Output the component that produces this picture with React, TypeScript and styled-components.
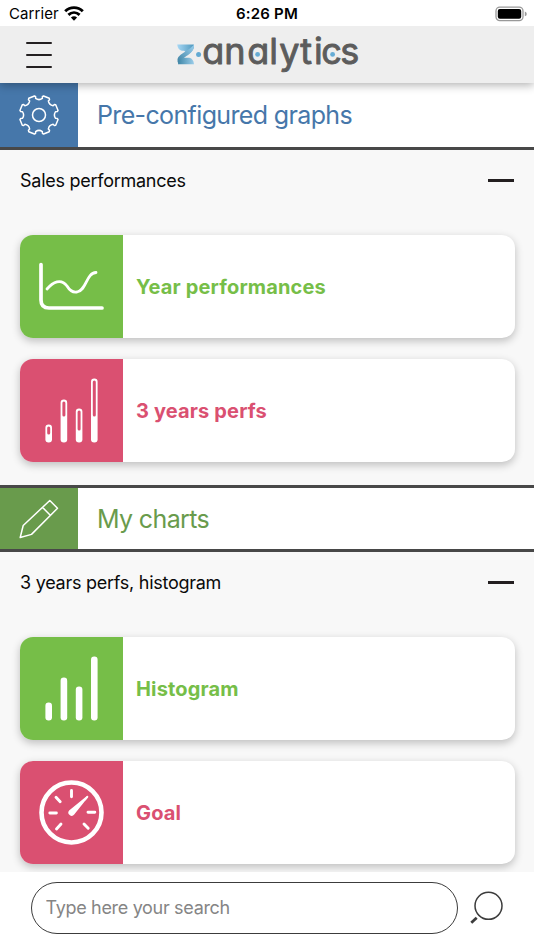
import React from "react";
import styled, { createGlobalStyle } from "styled-components";

const GlobalStyle = createGlobalStyle`
  * { box-sizing: border-box; }
  body { margin: 0; background: #f8f8f8; font-family: Inter, "Liberation Sans", sans-serif; }
`;

const Screen = styled.div`
  display: flex;
  flex-direction: column;
  height: 950px;
  overflow: hidden;
  background: #f8f8f8;
`;

const StatusBar = styled.div`
  flex: none;
  position: relative;
  z-index: 3;
  display: grid;
  grid-template-columns: 1fr auto 1fr;
  align-items: center;
  height: 26px;
  padding: 1px 7px 0 9px;
  background: #fff;
  color: #000;
  font-size: 15px;
`;

const Carrier = styled.div`
  display: flex;
  align-items: center;
  gap: 5px;
  letter-spacing: 0.08px;
`;

const Clock = styled.div`
  margin-right: 2px;
  font-weight: 600;
  letter-spacing: 0.2px;
`;

const BatteryIcon = styled.svg`
  display: block;
  justify-self: end;
`;

const Header = styled.header`
  flex: none;
  position: relative;
  z-index: 2;
  display: flex;
  align-items: center;
  height: 57px;
  background: #eee;
  box-shadow: 0 2px 9px rgba(0, 0, 0, 0.32);
`;

const MenuButton = styled.button`
  display: flex;
  flex-direction: column;
  justify-content: space-between;
  width: 26px;
  height: 26px;
  margin: 0 0 0 26px;
  padding: 0;
  border: 0;
  background: none;
`;

const MenuLine = styled.span`
  height: 2px;
  border-radius: 1px;
  background: #231f20;
`;

const Logo = styled.svg`
  display: block;
  margin-left: 123px;
`;

const Wordmark = styled.text`
  font-family: Inter, "Liberation Sans", sans-serif;
  font-size: 36px;
  font-weight: 400;
  font-feature-settings: "cv11" 1;
  fill: #5c5c5c;
  stroke: #5c5c5c;
  stroke-width: 0.9px;
  stroke-linejoin: round;
`;

const Content = styled.main`
  flex: 1;
  min-height: 0;
  overflow: hidden;
`;

const SectionTitle = styled.div<{ $color: string; $first?: boolean }>`
  display: flex;
  height: 67px;
  background: #fff;
  color: ${(p) => p.$color};
  border-top: ${(p) => (p.$first ? "0" : "3px solid #484848")};
  border-bottom: 3px solid #484848;
`;

const SectionIcon = styled.div<{ $color: string }>`
  display: flex;
  align-items: center;
  justify-content: center;
  width: 78px;
  background: ${(p) => p.$color};
`;

const SectionName = styled.h2`
  display: flex;
  align-items: center;
  margin: 0 0 0 19px;
  font-size: 25px;
  font-weight: 400;
  letter-spacing: -0.64px;
`;

const GroupRow = styled.div`
  display: flex;
  align-items: center;
  justify-content: space-between;
  height: 61px;
  padding: 0 20px;
  color: #0a0a0a;
  font-size: 18px;
`;

const GroupName = styled.span`
  letter-spacing: -0.26px;
`;

const Collapse = styled.span`
  width: 26px;
  height: 2.5px;
  background: #231f20;
`;

const CardList = styled.div`
  display: flex;
  flex-direction: column;
  gap: 21px;
  padding: 24px 19.5px 23px;
`;

const Card = styled.div<{ $color: string }>`
  display: flex;
  height: 103px;
  overflow: hidden;
  border-radius: 13px;
  background: #fff;
  color: ${(p) => p.$color};
  box-shadow: 0 3px 9px rgba(0, 0, 0, 0.24);
`;

const CardIcon = styled.div<{ $color: string }>`
  width: 103.5px;
  background: ${(p) => p.$color};
`;

const CardName = styled.div`
  display: flex;
  align-items: center;
  margin-left: 13px;
  font-size: 20px;
  font-weight: 700;
  letter-spacing: 0.15px;
`;

const Footer = styled.footer`
  flex: none;
  display: flex;
  align-items: flex-start;
  height: 78px;
  padding: 10px 0 0 30.5px;
  background: #fff;
`;

const SearchField = styled.input`
  width: 427.5px;
  height: 51.5px;
  padding: 0 14px;
  border: 1.5px solid #3c3c3c;
  border-radius: 26px;
  outline: 0;
  background: #fff;
  font: 400 18px Inter, "Liberation Sans", sans-serif;
  letter-spacing: -0.32px;
  &::placeholder { color: #858585; opacity: 1; }
`;

const SearchIcon = styled.svg`
  display: block;
  margin: 6px 0 0 11px;
`;

const BLUE = "#4677aa";
const OLIVE = "#699b4c";
const GREEN = "#76be48";
const PINK = "#da5071";

function gearPath() {
  const parts: string[] = [];
  const point = (deg: number, r: number) => {
    const a = (deg * Math.PI) / 180;
    return `${(20 + r * Math.sin(a)).toFixed(2)} ${(20 - r * Math.cos(a)).toFixed(2)}`;
  };
  for (let i = 0; i < 8; i++) {
    const c = 22.5 + i * 45;
    parts.push(`${i ? "L" : "M"}${point(c - 11, 16.9)}`);
    parts.push(`L${point(c - 12, 18.6)}`);
    parts.push(`L${point(c - 9, 19.6)}`);
    parts.push(`L${point(c + 9, 19.6)}`);
    parts.push(`L${point(c + 12, 18.6)}`);
    parts.push(`L${point(c + 11, 16.9)}`);
    parts.push(`Q${point(c + 22.5, 14.2)} ${point(c + 34, 16.9)}`);
  }
  return parts.join("") + "Z";
}

const GearIcon = () => (
  <svg width="40" height="40" viewBox="0 0 40 40" fill="none" stroke="#fff" strokeWidth="1.5" strokeLinejoin="round">
    <path d={gearPath()} />
    <circle cx="20" cy="20" r="6.5" />
  </svg>
);

const PencilIcon = () => (
  <svg width="40" height="40" viewBox="0 0 40 40" fill="none" stroke="#fff" strokeWidth="1.5" strokeLinejoin="round">
    <path d="M1.2 38.5 4.2 26.5 30.8 1.5 38.5 9.3 12.5 35.4ZM23.5 8.4 31.3 16.2" />
  </svg>
);

const bars = [
  { x: 25.4, top: 65.5, hollow: 75.5 },
  { x: 40.6, top: 40.5, hollow: 57.5 },
  { x: 55.8, top: 49.5, hollow: 71.5 },
  { x: 71, top: 19.5, hollow: 57.5 },
];

const BarsIcon = ({ hollow }: { hollow?: boolean }) => (
  <svg width="103" height="103" viewBox="0 0 103 103">
    {bars.map((b) => (
      <g key={b.x}>
        <rect x={b.x} y={b.top} width="6.6" height={83.5 - b.top} rx="3.2" fill="#fff" />
        {hollow && <rect x={b.x + 1.8} y={b.top + 2} width="3" height={b.hollow - b.top - 2} rx="1.5" fill={PINK} />}
      </g>
    ))}
  </svg>
);

const LineIcon = () => (
  <svg width="103" height="103" viewBox="0 0 103 103" fill="none" stroke="#fff" strokeLinecap="round">
    <path d="M21 29.5V65Q21 73 29 73H82" strokeWidth="3.7" />
    <path d="M27 54C33 47 41 43 47 51C50 56 53 57.7 57 57C67 55 66 38 76 37.5" strokeWidth="2.8" />
  </svg>
);

const GaugeIcon = () => (
  <svg width="103" height="103" viewBox="0 0 103 103" fill="none" stroke="#fff" strokeLinecap="round">
    <circle cx="51.5" cy="51.5" r="30" strokeWidth="4.6" />
    <path d="M51.5 29.5v6.3M29.8 52h6.6M68 51.3h6.8M36 36.2l4.2 4.6M41 63l-4.5 4.9M64 63l4.2 4.3" strokeWidth="2.9" />
    <path d="M67.2 34.8 49.1 49.5A3.2 3.2 0 1 0 54.2 53.5L68.2 36Z" fill="#fff" stroke="none" />
    <path d="M67.4 35.8 65 38.6" strokeWidth="1.8" />
  </svg>
);

interface Chart { name: string; color: string; icon: React.ReactNode }

const Charts = ({ items }: { items: Chart[] }) => (
  <CardList>
    {items.map((c) => (
      <Card key={c.name} $color={c.color}>
        <CardIcon $color={c.color}>{c.icon}</CardIcon>
        <CardName>{c.name}</CardName>
      </Card>
    ))}
  </CardList>
);

export default function App() {
  return (
    <Screen>
      <GlobalStyle />
      <StatusBar>
        <Carrier>
          Carrier
          <svg width="20" height="15" viewBox="0 0 20 15" fill="none" stroke="#000" strokeWidth="2.9">
            <path d="M1.2 5.3C6.2.4 13.8.4 18.8 5.3M4.4 8.9C7.7 5.9 12.3 5.9 15.6 8.9" />
            <path d="M6.9 11.6Q10 8.8 13.1 11.6L10 14.7Z" fill="#000" stroke="none" />
          </svg>
        </Carrier>
        <Clock>6:26 PM</Clock>
        <BatteryIcon width="32" height="16" viewBox="0 0 32 16">
          <rect x="1" y="1.2" width="27" height="13.4" rx="3.8" fill="none" stroke="#999" strokeWidth="1.3" />
          <rect x="2.8" y="3" width="23.4" height="9.8" rx="2.1" />
          <path d="M29.8 5.6Q31.8 6.2 31.8 7.9T29.8 10.2Z" fill="#999" />
        </BatteryIcon>
      </StatusBar>
      <Header>
        <MenuButton aria-label="Menu"><MenuLine /><MenuLine /><MenuLine /></MenuButton>
        <Logo width="186" height="54" viewBox="0 0 186 54">
          <defs>
            <linearGradient id="top" x1="0" x2="1"><stop stopColor="#a6d7f5" /><stop offset="1" stopColor="#4f98bd" /></linearGradient>
            <linearGradient id="fold" x1="0" y1="1" x2="1" y2="0"><stop stopColor="#3b7f9f" /><stop offset="1" stopColor="#9bd0ef" /></linearGradient>
            <linearGradient id="base" x1="0" x2="1"><stop stopColor="#3e86a7" /><stop offset="1" stopColor="#9bcdea" /></linearGradient>
          </defs>
          <path d="M2.2 16.5H18.8Q19.6 21 15.8 24.3L13 26.5 9.2 22.8H6.8Q2.8 21.8 2.2 16.5Z" fill="url(#top)" />
          <path d="M19 16.7C19.4 27.5 7 27.3 4 36Q0 31.2 5.6 26.8L12.2 22.2Q16 20 19 16.7Z" fill="url(#fold)" />
          <path d="M3 35.8Q5.2 29.8 9.5 29.8H14.4Q18.6 31 19 36.2H3Z" fill="url(#base)" />
          <circle cx="23.6" cy="26.5" r="2.5" fill="#62a9d2" />
          <Wordmark x="27.2 49.2 72.2 94.2 104.2 125.2 139 146.2 165.2" y="36">analytics</Wordmark>
          <circle cx="82.6" cy="26.4" r="2.4" fill="#66acd5" />
          <circle cx="157.6" cy="26.4" r="2.4" fill="#66acd5" />
        </Logo>
      </Header>
      <Content>
        <SectionTitle $color={BLUE} $first>
          <SectionIcon $color={BLUE}><GearIcon /></SectionIcon>
          <SectionName>Pre-configured graphs</SectionName>
        </SectionTitle>
        <GroupRow><GroupName>Sales performances</GroupName><Collapse /></GroupRow>
        <Charts items={[
          { name: "Year performances", color: GREEN, icon: <LineIcon /> },
          { name: "3 years perfs", color: PINK, icon: <BarsIcon hollow /> },
        ]} />
        <SectionTitle $color={OLIVE}>
          <SectionIcon $color={OLIVE}><PencilIcon /></SectionIcon>
          <SectionName>My charts</SectionName>
        </SectionTitle>
        <GroupRow><GroupName>3 years perfs, histogram</GroupName><Collapse /></GroupRow>
        <Charts items={[
          { name: "Histogram", color: GREEN, icon: <BarsIcon /> },
          { name: "Goal", color: PINK, icon: <GaugeIcon /> },
        ]} />
      </Content>
      <Footer>
        <SearchField placeholder="Type here your search" />
        <SearchIcon width="36" height="38" viewBox="0 0 36 38" fill="none" stroke="#3c3c3c">
          <circle cx="19.5" cy="17.8" r="13.5" strokeWidth="1.5" />
          <path d="M2.3 34.8 7.7 29.8" strokeWidth="2.8" />
        </SearchIcon>
      </Footer>
    </Screen>
  );
}
